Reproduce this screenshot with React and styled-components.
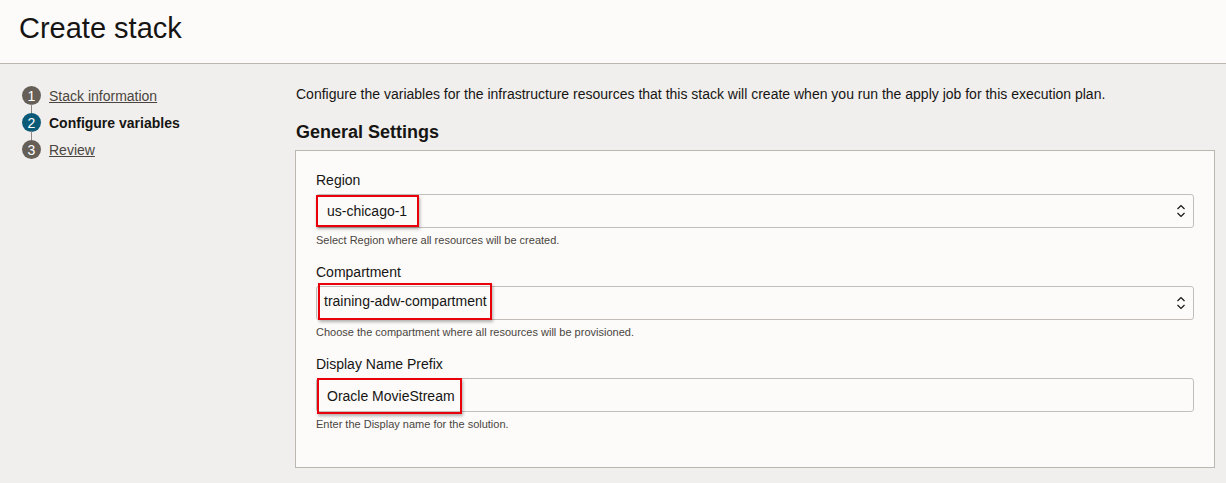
import React from 'react';
import styled, {createGlobalStyle} from 'styled-components';

const GlobalStyle = createGlobalStyle`
    html, body {
        margin: 0;
        padding: 0;
        background: #f1efed;
        font-family: "Liberation Sans", Arial, sans-serif;
        color: #161513;
    }
`;

const Page = styled.div`
    width: 1226px;
    height: 483px;
    overflow: hidden;
    background: #f1efed;
`;

const Header = styled.header`
    height: 64px;
    background: #fcfbfa;
    border-bottom: 1px solid #bcb6b1;
    display: flex;
    align-items: center;
    padding-left: 19px;
    box-sizing: border-box;
`;

const Title = styled.h1`
    margin: 0 0 6px 0;
    font-size: 29px;
    font-weight: normal;
    color: #161513;
`;

const Body = styled.div`
    display: flex;
    padding-top: 18px;
`;

const Steps = styled.ol`
    list-style: none;
    margin: 0;
    padding: 0 0 0 22px;
    width: 295px;
    box-sizing: border-box;
`;

const StepRow = styled.li`
    position: relative;
    display: flex;
    align-items: center;
    height: 27px;
    gap: 8px;

    &:not(:last-child)::after {
        content: "";
        position: absolute;
        left: 9px;
        top: 22px;
        width: 1px;
        height: 10px;
        background: #8f8882;
    }
`;

const StepNum = styled.span`
    width: 19px;
    height: 19px;
    border-radius: 50%;
    background: ${p => p.$active ? '#0b5b78' : '#665f58'};
    color: #fff;
    font-size: 14px;
    display: flex;
    align-items: center;
    justify-content: center;
    flex-shrink: 0;
`;

const StepLabel = styled.span`
    font-size: 14px;
    color: ${p => p.$active ? '#161513' : '#4a4540'};
    font-weight: ${p => p.$active ? 'bold' : 'normal'};
    text-decoration: ${p => p.$active ? 'none' : 'underline'};
`;

const Content = styled.main`
    flex: 1;
    padding: 4px 11px 0 0;
`;

const Intro = styled.p`
    margin: 0 0 0 1px;
    font-size: 14px;
    line-height: 17px;
    color: #161513;
`;

const SectionTitle = styled.h2`
    margin: 18px 0 7px 1px;
    font-size: 18px;
    line-height: 22px;
    font-weight: bold;
    color: #161513;
`;

const Panel = styled.section`
    background: #fcfbfa;
    border: 1px solid #bcb6b1;
    padding: 21px 20px 36px 20px;
    display: flex;
    flex-direction: column;
    gap: 17px;
`;

const Field = styled.div`
    display: flex;
    flex-direction: column;
`;

const Label = styled.label`
    font-size: 14px;
    line-height: 17px;
    color: #161513;
    margin-bottom: 5px;
`;

const Control = styled.div`
    position: relative;
    height: 34px;
    box-sizing: border-box;
    border: 1px solid #c3beb9;
    border-radius: 3px;
    background: #fcfbfa;
    display: flex;
    align-items: center;
    padding-right: 7px;
`;

const Highlight = styled.span`
    display: inline-flex;
    align-items: center;
    box-sizing: border-box;
    height: ${p => p.$h}px;
    margin-top: ${p => p.$mt}px;
    margin-left: ${p => p.$ml}px;
    padding: 0 ${p => p.$pr}px 0 ${p => p.$pl}px;
    border: 2px solid #e8000b;
    box-shadow: 1px 2px 3px rgba(0, 0, 0, 0.3);
    font-size: 14px;
    color: #161513;
    white-space: nowrap;
`;

const Spinner = styled.svg`
    margin-left: auto;
    flex-shrink: 0;
`;

const Help = styled.div`
    margin-top: 6px;
    font-size: 11px;
    line-height: 13px;
    color: #4a4540;
`;

const SelectArrows = () => (
    <Spinner width="10" height="14" viewBox="0 0 10 14" fill="none" stroke="#161513" strokeWidth="1.2">
        <path d="M1.5 5 L5 1.5 L8.5 5"/>
        <path d="M1.5 9 L5 12.5 L8.5 9"/>
    </Spinner>
);

const steps = [
    {num: 1, label: 'Stack information'},
    {num: 2, label: 'Configure variables', active: true},
    {num: 3, label: 'Review'}
];

const fields = [
    {
        label: 'Region',
        value: 'us-chicago-1',
        select: true,
        help: 'Select Region where all resources will be created.',
        box: {h: 32, mt: 0, ml: -1, pl: 9, pr: 10}
    },
    {
        label: 'Compartment',
        value: 'training-adw-compartment',
        select: true,
        help: 'Choose the compartment where all resources will be provisioned.',
        box: {h: 37, mt: -4, ml: 1, pl: 4, pr: 3}
    },
    {
        label: 'Display Name Prefix',
        value: 'Oracle MovieStream',
        select: false,
        help: 'Enter the Display name for the solution.',
        box: {h: 36, mt: 1, ml: 0, pl: 8, pr: 5}
    }
];

const App = () => {
    return (
        <Page>
            <GlobalStyle/>
            <Header>
                <Title>Create stack</Title>
            </Header>
            <Body>
                <Steps>
                    {steps.map(s => (
                        <StepRow key={s.num}>
                            <StepNum $active={s.active}>{s.num}</StepNum>
                            <StepLabel $active={s.active}>{s.label}</StepLabel>
                        </StepRow>
                    ))}
                </Steps>
                <Content>
                    <Intro>
                        Configure the variables for the infrastructure resources that this stack will create when you run the apply job for this execution plan.
                    </Intro>
                    <SectionTitle>General Settings</SectionTitle>
                    <Panel>
                        {fields.map(f => (
                            <Field key={f.label}>
                                <Label>{f.label}</Label>
                                <Control>
                                    <Highlight
                                        $h={f.box.h}
                                        $mt={f.box.mt}
                                        $ml={f.box.ml}
                                        $pl={f.box.pl}
                                        $pr={f.box.pr}
                                    >
                                        {f.value}
                                    </Highlight>
                                    {f.select && <SelectArrows/>}
                                </Control>
                                <Help>{f.help}</Help>
                            </Field>
                        ))}
                    </Panel>
                </Content>
            </Body>
        </Page>
    );
};

export default App;
